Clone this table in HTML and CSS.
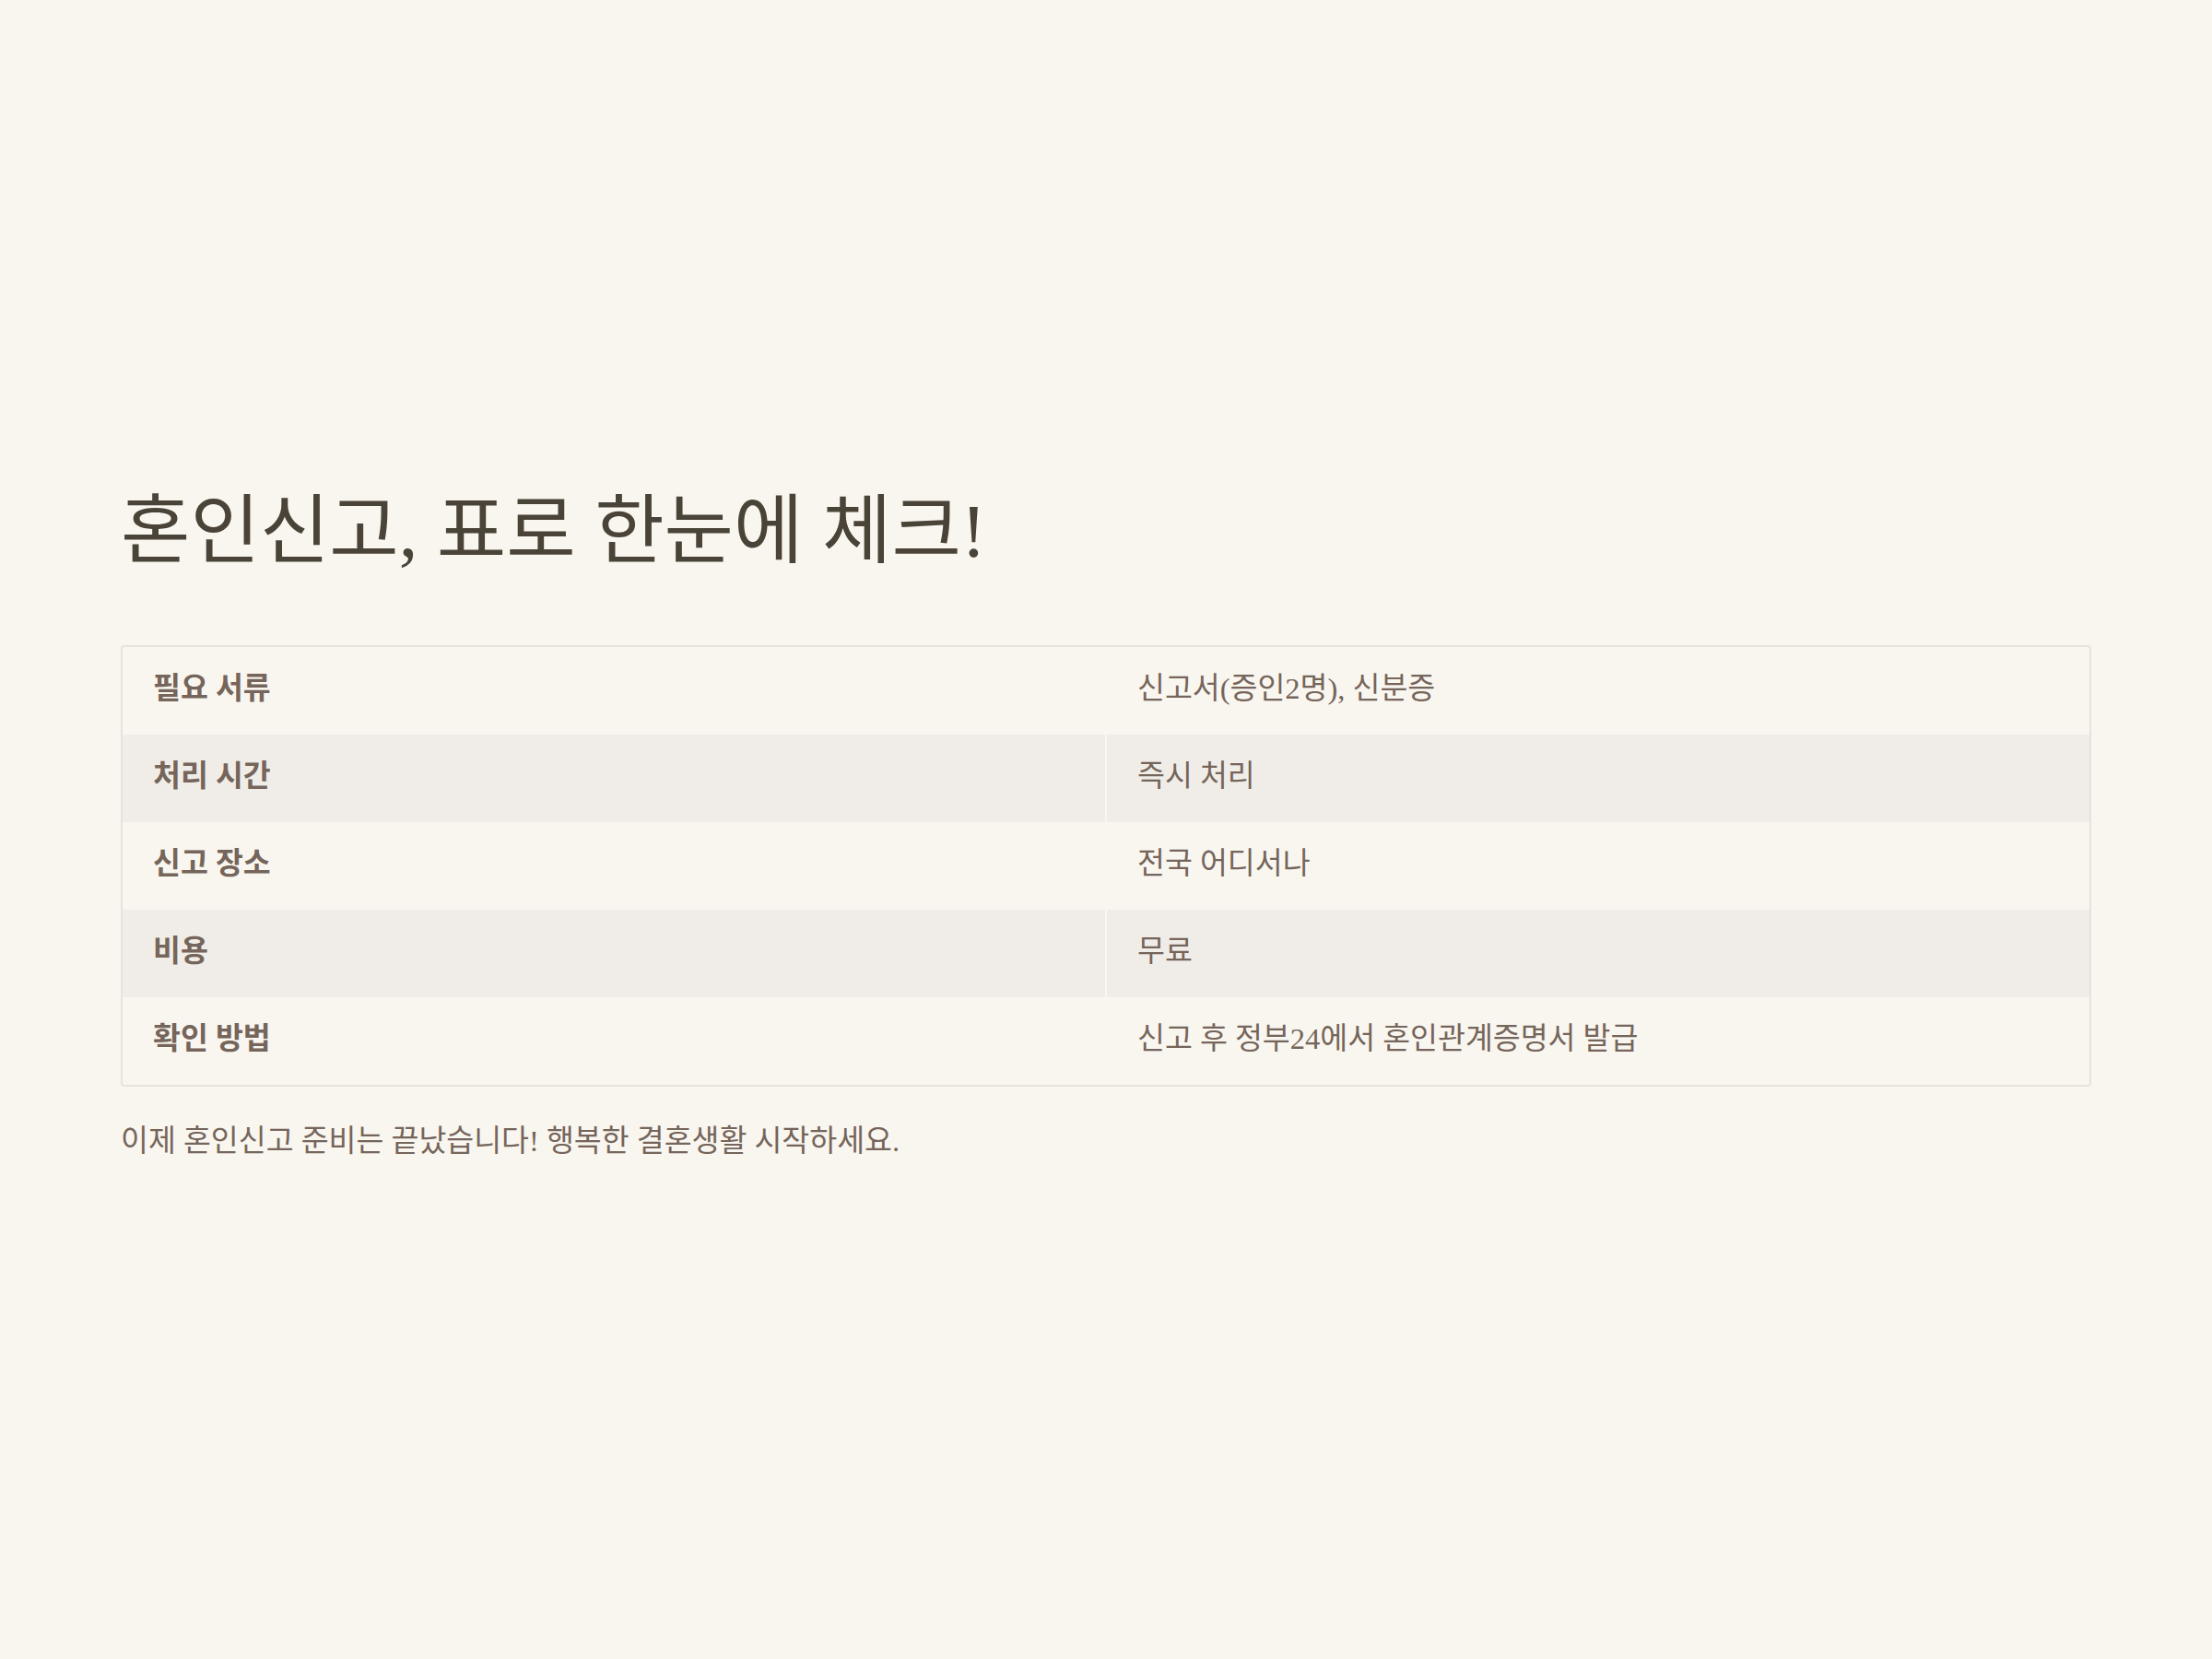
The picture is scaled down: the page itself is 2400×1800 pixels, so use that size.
FILE: index.html
```html
<!DOCTYPE html>
<html lang="ko">
<head>
<meta charset="utf-8">
<title>혼인신고, 표로 한눈에 체크!</title>
<link rel="stylesheet" href="styles.css">
</head>
<body>
<main class="page">
  <section class="content">
    <h1 class="title">혼인신고, 표로 한눈에 체크!</h1>
    <div class="table-wrap">
      <table class="info">
        <tbody>
          <tr><th>필요 서류</th><td>신고서(증인2명), 신분증</td></tr>
          <tr class="alt"><th>처리 시간</th><td>즉시 처리</td></tr>
          <tr><th>신고 장소</th><td>전국 어디서나</td></tr>
          <tr class="alt"><th>비용</th><td>무료</td></tr>
          <tr><th>확인 방법</th><td>신고 후 정부24에서 혼인관계증명서 발급</td></tr>
        </tbody>
      </table>
    </div>
    <p class="note">이제 혼인신고 준비는 끝났습니다! 행복한 결혼생활 시작하세요.</p>
  </section>
</main>
</body>
</html>
```
FILE: styles.css
```css
* { box-sizing: border-box; }
html, body { margin: 0; padding: 0; }
body {
  background: #f9f6f0;
  font-family: "Liberation Serif", "Noto Sans CJK KR", serif;
  color: #75655a;
}
.page {
  min-height: 100vh;
  padding-bottom: 12px;
  display: flex;
  flex-direction: column;
  justify-content: center;
  align-items: center;
}
.content {
  width: 2138px;
  display: flex;
  flex-direction: column;
}
.title {
  margin: 0 0 73px 0;
  font-size: 82px;
  font-weight: 400;
  line-height: 100px;
  color: #4a4337;
}
.table-wrap {
  border: 2px solid #e6e2dc;
  border-radius: 4px;
  overflow: hidden;
}
.info {
  width: 100%;
  border-collapse: collapse;
  table-layout: fixed;
  font-size: 32.5px;
  line-height: 31px;
}
.info th, .info td {
  padding: 30px 33px 34px 33px;
  text-align: left;
  vertical-align: middle;
}
.info th {
  width: 50%;
  font-weight: 700;
  color: #75655a;
  border-right: 2px solid #f9f6f0;
}
.info td { font-weight: 400; color: #75655a; }
.info tr.alt { background: #f0ede8; }
.note {
  margin: 37px 0 0 0;
  font-size: 32.5px;
  line-height: 45px;
  color: #75655a;
}
```
